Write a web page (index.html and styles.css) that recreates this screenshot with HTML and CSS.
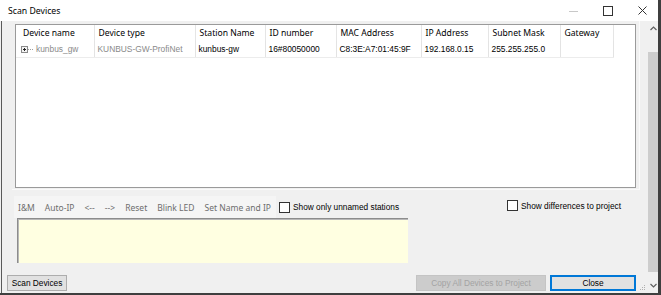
FILE: index.html
```html
<!DOCTYPE html>
<html>
<head>
<meta charset="utf-8">
<link rel="stylesheet" href="styles.css">
</head>
<body>
<div class="window">
  <div class="titlebar">
    <span class="title">Scan Devices</span>
    <div class="caps">
      <svg class="cap min" width="9" height="10" viewBox="0 0 9 10"><line x1="0" y1="5.5" x2="9" y2="5.5" stroke="#c8c8c8" stroke-width="1"/></svg>
      <svg class="cap max" width="10" height="10" viewBox="0 0 10 10"><rect x="0.5" y="0.5" width="9" height="9" fill="none" stroke="#333" stroke-width="1"/></svg>
      <svg class="cap close" width="9" height="9" viewBox="0 0 9 9"><path d="M0.5 0.5 L8.5 8.5 M8.5 0.5 L0.5 8.5" stroke="#333" stroke-width="1"/></svg>
    </div>
  </div>
  <div class="client">
    <div class="content">
      <div class="listpanel">
        <div class="list">
          <table class="grid">
            <colgroup>
              <col style="width:78px"><col style="width:101px"><col style="width:70px"><col style="width:71px"><col style="width:85px"><col style="width:67px"><col style="width:72px"><col style="width:53px"><col>
            </colgroup>
            <thead>
              <tr>
                <th class="first">Device name</th><th>Device type</th><th>Station Name</th><th>ID number</th><th>MAC Address</th><th>IP Address</th><th>Subnet Mask</th><th>Gateway</th><th class="filler"></th>
              </tr>
            </thead>
            <tbody>
              <tr>
                <td class="muted first"><span class="expander"><svg width="12" height="7" viewBox="0 0 12 7"><rect x="0.5" y="0.5" width="6" height="6" fill="#f4f4f4" stroke="#8a8a8a"/><path d="M2 3.5 H5 M3.5 2 V5" stroke="#222" stroke-width="1"/><path d="M7 3.5 H12" stroke="#a0a0a0" stroke-dasharray="1 1"/></svg></span>kunbus_gw</td>
                <td class="muted">KUNBUS-GW-ProfiNet</td>
                <td>kunbus-gw</td>
                <td>16#80050000</td>
                <td>C8:3E:A7:01:45:9F</td>
                <td>192.168.0.15</td>
                <td>255.255.255.0</td>
                <td></td>
                <td class="filler"></td>
              </tr>
            </tbody>
          </table>
        </div>
      </div>
      <div class="toolrow">
        <div class="toolbar">
          <span class="tool">I&amp;M</span>
          <span class="tool">Auto-IP</span>
          <span class="tool">&lt;--</span>
          <span class="tool">--&gt;</span>
          <span class="tool">Reset</span>
          <span class="tool">Blink LED</span>
          <span class="tool">Set Name and IP</span>
        </div>
        <label class="check"><span class="box"></span>Show only unnamed stations</label>
        <label class="check diff"><span class="box"></span>Show differences to project</label>
      </div>
      <div class="notes"></div>
      <div class="buttons">
        <span class="btn scan">Scan Devices</span>
        <span class="spacer"></span>
        <span class="btn disabled">Copy All Devices to Project</span>
        <span class="btn primary">Close</span>
        <span class="grip">
          <svg width="7" height="7" viewBox="0 0 7 7"><rect x="5" y="1" width="1" height="1" fill="#b0b0b0"/><rect x="3" y="3" width="1" height="1" fill="#b0b0b0"/><rect x="5" y="3" width="1" height="1" fill="#b0b0b0"/><rect x="1" y="5" width="1" height="1" fill="#b0b0b0"/><rect x="3" y="5" width="1" height="1" fill="#b0b0b0"/><rect x="5" y="5" width="1" height="1" fill="#b0b0b0"/></svg>
        </span>
      </div>
    </div>
    <div class="vscroll">
      <div class="arrow up"><svg width="7" height="5" viewBox="0 0 7 5"><path d="M0.5 4 L3.5 1 L6.5 4" fill="none" stroke="#606060" stroke-width="1.2"/></svg></div>
      <div class="track"><div class="thumb"></div></div>
      <div class="arrow down"><svg width="7" height="5" viewBox="0 0 7 5"><path d="M0.5 1 L3.5 4 L6.5 1" fill="none" stroke="#606060" stroke-width="1.2"/></svg></div>
    </div>
  </div>
</div>
</body>
</html>
```

FILE: styles.css
```css
* { box-sizing: border-box; }
html, body { margin: 0; padding: 0; }
body {
  width: 661px;
  height: 295px;
  overflow: hidden;
  background: #f0f0f0;
  font-family: "Liberation Sans", Arial, sans-serif;
}
.window {
  width: 661px;
  height: 295px;
  display: flex;
  flex-direction: column;
  border-right: 3px solid #3f3f3f;
  border-bottom: 2px solid #3f3f3f;
  background: #f0f0f0;
}
.titlebar {
  height: 21px;
  background: #ffffff;
  display: flex;
  align-items: center;
  flex: none;
}
.title {
  font-family: "Noto Sans", sans-serif;
  font-size: 8.7px;
  color: #000;
  padding-left: 8px;
  flex: 1;
}
.caps {
  display: flex;
  align-items: center;
  height: 21px;
}
.cap { display: block; }
.cap.min { margin-right: 25px; }
.cap.max { margin-right: 25px; }
.cap.close { margin-right: 11px; }

.client {
  flex: 1;
  display: flex;
  min-height: 0;
  margin-left: 1px;
  border-left: 1px solid #5a5a5a;
}
.content {
  flex: 1;
  display: flex;
  flex-direction: column;
  min-width: 0;
}
.listpanel {
  margin: 0 8px 0 10px;
  padding: 3px 3px 2px 3px;
  height: 169px;
  border-right: 1px solid #fafafa;
  border-bottom: 1px solid #fafafa;
  flex: none;
}
.list {
  height: 164px;
  background: #fff;
  border: 1px solid #9a9a9a;
  overflow: hidden;
}
.grid {
  border-collapse: collapse;
  table-layout: fixed;
  width: 620px;
}
.grid th {
  font-family: "Noto Sans", sans-serif;
  font-weight: normal;
  font-size: 8.6px;
  color: #000;
  text-align: left;
  height: 16px;
  padding: 0 0 0 4px;
  border-right: 1px solid #e5e5e5;
  white-space: nowrap;
  overflow: hidden;
}
.grid th.first { padding-left: 7px; }
.grid td {
  font-family: "Liberation Sans", Arial, sans-serif;
  font-size: 8.4px;
  color: #000;
  height: 16px;
  padding: 0 0 0 3px;
  border-right: 1px solid #e3e3e3;
  border-bottom: 1px solid #ececec;
  white-space: nowrap;
  overflow: hidden;
}
.grid th.filler, .grid td.filler { border-right: none; border-bottom: none; }
.grid td.muted { color: #8a8a8a; }
.grid td.first { padding-left: 5px; }
.expander {
  display: inline-block;
  width: 15px;
  vertical-align: -1px;
}
.expander svg { display: block; }

.toolrow {
  display: flex;
  align-items: center;
  height: 22px;
  margin-top: 6px;
  flex: none;
}
.toolbar {
  display: flex;
  align-items: center;
  height: 22px;
  margin-left: 12px;
  padding: 0 4px 0 4px;
  background: #f5f5f5;
  gap: 10px;
  width: 262px;
}
.tool {
  font-family: "Noto Sans", sans-serif;
  font-size: 8.5px;
  color: #6d6d6d;
  white-space: nowrap;
}
.check {
  display: flex;
  align-items: center;
  font-size: 8.3px;
  color: #000;
  white-space: nowrap;
}
.check .box {
  width: 11px;
  height: 11px;
  border: 1px solid #333;
  background: #fff;
  margin-right: 3px;
  flex: none;
}
.toolrow > .check:first-of-type { margin-left: 3px; }
.check.diff { margin-left: auto; margin-right: 27px; margin-top: -3px; }

.notes {
  margin: 0 0 0 15px;
  width: 391px;
  height: 45px;
  background: #ffffe1;
  border-top: 1px solid #8c8c8c;
  border-left: 1px solid #8c8c8c;
  box-shadow: inset 1px 1px 0 #b8b8b8;
  flex: none;
}
.buttons {
  display: flex;
  align-items: center;
  margin-top: 12px;
  padding-left: 5px;
  height: 16px;
  flex: none;
}
.btn {
  display: flex;
  align-items: center;
  justify-content: center;
  height: 16px;
  font-size: 8.3px;
  color: #000;
  background: #e1e1e1;
  border: 1px solid #adadad;
  white-space: nowrap;
}
.btn.scan { width: 60px; }
.spacer { flex: 1; }
.btn.disabled {
  width: 130px;
  background: #cccccc;
  border-color: #c4c4c4;
  color: #a3a3a3;
  margin-right: 4px;
}
.btn.primary {
  width: 86px;
  border: 1px solid #0078d7;
  box-shadow: inset 0 0 0 1px #0078d7;
}
.grip {
  width: 12px;
  height: 16px;
  display: flex;
  align-items: flex-end;
  justify-content: center;
}
.grip svg { display: block; }

.vscroll {
  width: 10px;
  flex: none;
  display: flex;
  flex-direction: column;
  background: #f0f0f0;
}
.arrow {
  height: 15px;
  display: flex;
  align-items: center;
  justify-content: center;
  flex: none;
}
.arrow svg { display: block; }
.track {
  flex: 1;
  padding: 16px 0 6px 0;
  display: flex;
}
.thumb {
  flex: 1;
  background: #cdcdcd;
}
```
